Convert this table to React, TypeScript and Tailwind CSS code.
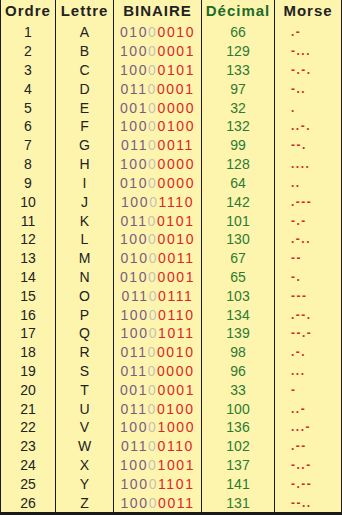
import React from "react";

const rows: [string, string, string, string, string][] = [
  ["1", "A", "01000010", "66", ".-"],
  ["2", "B", "10000001", "129", "-..."],
  ["3", "C", "10000101", "133", "-.-."],
  ["4", "D", "01100001", "97", "-.."],
  ["5", "E", "00100000", "32", "."],
  ["6", "F", "10000100", "132", "..-."],
  ["7", "G", "01100011", "99", "--."],
  ["8", "H", "10000000", "128", "...."],
  ["9", "I", "01000000", "64", ".."],
  ["10", "J", "10001110", "142", ".---"],
  ["11", "K", "01100101", "101", "-.-"],
  ["12", "L", "10000010", "130", ".-.."],
  ["13", "M", "01000011", "67", "--"],
  ["14", "N", "01000001", "65", "-."],
  ["15", "O", "01100111", "103", "---"],
  ["16", "P", "10000110", "134", ".--."],
  ["17", "Q", "10001011", "139", "--.-"],
  ["18", "R", "01100010", "98", ".-."],
  ["19", "S", "01100000", "96", "..."],
  ["20", "T", "00100001", "33", "-"],
  ["21", "U", "01100100", "100", "..-"],
  ["22", "V", "10001000", "136", "...-"],
  ["23", "W", "01100110", "102", ".--"],
  ["24", "X", "10001001", "137", "-..-"],
  ["25", "Y", "10001101", "141", "-.--"],
  ["26", "Z", "10000011", "131", "--.."],
];

const cols = "grid grid-cols-[55px_58px_88px_73px_66px]";
const cell = "border-r border-[#1a1a1a] flex items-center justify-center";

export default function App() {
  return (
    <div
      className="w-[342px] h-[515px] bg-[#fdf5ae] border-l border-r border-b-[3px] border-[#1a1a1a] flex flex-col"
      style={{ fontFamily: '"Liberation Sans", Arial, sans-serif' }}
    >
      <div className={`${cols} h-[23px] shrink-0 text-[15px] font-bold text-[#222] tracking-[1px]`}>
        <div className={cell}>Ordre</div>
        <div className={cell}>Lettre</div>
        <div className={cell}>BINAIRE</div>
        <div className={`${cell} text-[#1d6a2a]`}>Décimal</div>
        <div className="flex items-center justify-center">Morse</div>
      </div>
      {rows.map(([n, l, b, d, m]) => (
        <div key={n} className={`${cols} flex-1 text-[14px] leading-none`}>
          <div className={`${cell} text-[#222]`}>{n}</div>
          <div className={`${cell} text-[#222]`}>{l}</div>
          <div className={`${cell} tracking-[1.6px]`}>
            <span className="text-[#7b5c80]">{b.slice(0, 3)}</span>
            <span className="text-[#c9c0b6]">{b.slice(3, 4)}</span>
            <span className="text-[#e02424]">{b.slice(4)}</span>
          </div>
          <div className={`${cell} text-[#2d7a33]`}>{d}</div>
          <div className="flex items-center pl-4 text-[#cc2b2b] font-bold text-[12px] tracking-[1.5px]">{m}</div>
        </div>
      ))}
    </div>
  );
}
